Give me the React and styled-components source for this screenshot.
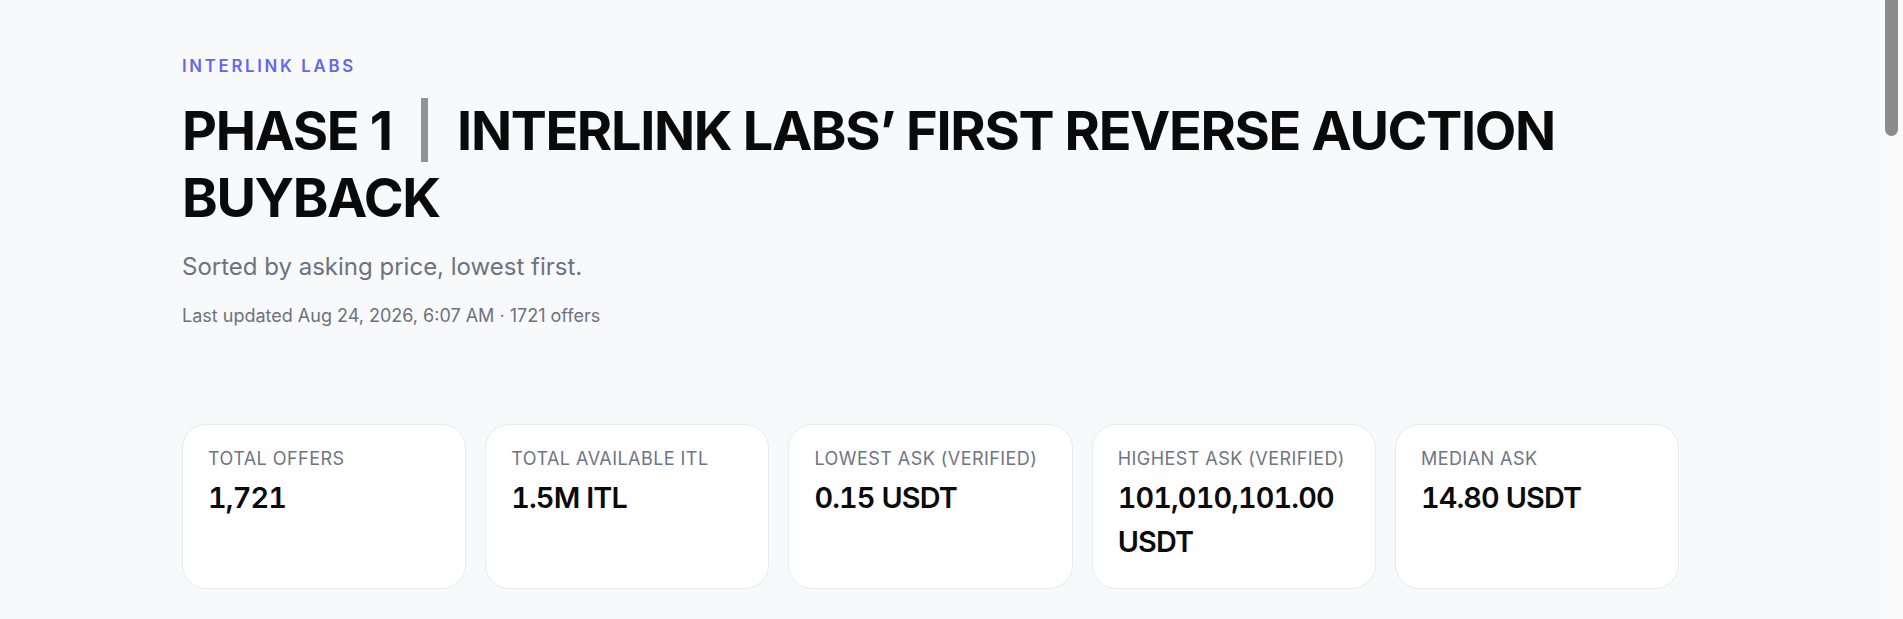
import React from "react";
import styled, { createGlobalStyle } from "styled-components";

const GlobalStyle = createGlobalStyle`
  html, body {
    margin: 0;
    padding: 0;
    background: #f8f9fb;
  }
  body {
    font-family: Inter, "Noto Sans", "Liberation Sans", sans-serif;
    -webkit-font-smoothing: antialiased;
  }
  * { box-sizing: border-box; }
`;

const Page = styled.main`
  padding: 57px 0 80px 182px;
`;

const Container = styled.div`
  width: 1500px;
  display: flex;
  flex-direction: column;
`;

const Header = styled.header`
  display: flex;
  flex-direction: column;
`;

const Eyebrow = styled.div`
  font-size: 16.8px;
  line-height: 19.2px;
  font-weight: 600;
  letter-spacing: 0.16em;
  color: #6366f1;
  text-transform: uppercase;
`;

const Title = styled.h1`
  margin: 20.5px 0 0;
  font-size: 54px;
  line-height: 67.5px;
  font-weight: 700;
  letter-spacing: -0.025em;
  color: #0a0a0a;
  max-width: 1420px;
`;

const Divider = styled.span`
  display: inline-block;
  width: 7.5px;
  height: 64px;
  vertical-align: -12.5px;
  background: #949494;
  margin: 0 29px 0 29px;
`;

const Subtitle = styled.p`
  margin: 18.5px 0 0;
  font-size: 24px;
  line-height: 33.6px;
  color: #6b7280;
`;

const Meta = styled.p`
  margin: 20px 0 0;
  font-size: 18px;
  line-height: 24px;
  color: #6b7280;
`;

const StatsGrid = styled.section`
  margin-top: 96px;
  display: grid;
  grid-template-columns: repeat(5, 1fr);
  gap: 19.2px;
  width: 1497px;
`;

const StatCard = styled.div`
  background: #ffffff;
  border: 1px solid #e8eaee;
  border-radius: 24px;
  padding: 24px 24px 24px 25px;
  min-height: 165px;
  display: flex;
  flex-direction: column;
  gap: 7.5px;
`;

const StatLabel = styled.div`
  font-size: 18px;
  line-height: 20px;
  letter-spacing: 0.025em;
  color: #6e7585;
  text-transform: uppercase;
`;

const StatValue = styled.div`
  font-size: 28.8px;
  line-height: 43.5px;
  font-weight: 600;
  font-variant-numeric: tabular-nums;
  letter-spacing: -0.03em;
  color: #0b0b0b;
`;

const ScrollTrack = styled.div`
  position: fixed;
  top: 0;
  right: 0;
  width: 24px;
  height: 100vh;
  background: #fafafa;
`;

const ScrollThumb = styled.div`
  margin-left: 6px;
  width: 13px;
  height: 136px;
  background: #8c8c8c;
  border-radius: 0 0 7px 7px;
`;

const stats = [
  { label: "Total offers", value: "1,721" },
  { label: "Total available ITL", value: "1.5M ITL" },
  { label: "Lowest ask (verified)", value: "0.15 USDT" },
  { label: "Highest ask (verified)", value: "101,010,101.00 USDT" },
  { label: "Median ask", value: "14.80 USDT" },
];

export default function App() {
  return (
    <>
      <GlobalStyle />
      <Page>
        <Container>
          <Header>
            <Eyebrow>Interlink Labs</Eyebrow>
            <Title>
              PHASE 1<Divider aria-hidden="true" />INTERLINK LABS’ FIRST REVERSE AUCTION BUYBACK
            </Title>
            <Subtitle>Sorted by asking price, lowest first.</Subtitle>
            <Meta>Last updated Aug 24, 2026, 6:07 AM · 1721 offers</Meta>
          </Header>
          <StatsGrid>
            {stats.map((s) => (
              <StatCard key={s.label}>
                <StatLabel>{s.label}</StatLabel>
                <StatValue>{s.value}</StatValue>
              </StatCard>
            ))}
          </StatsGrid>
        </Container>
      </Page>
      <ScrollTrack aria-hidden="true">
        <ScrollThumb />
      </ScrollTrack>
    </>
  );
}
